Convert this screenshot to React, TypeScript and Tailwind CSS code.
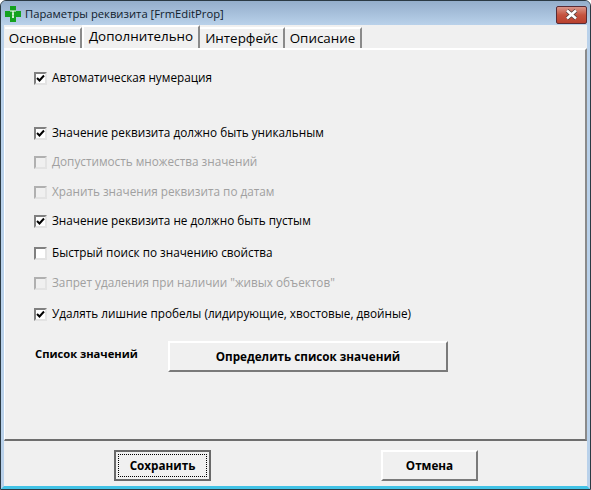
import React from 'react';

const font = "font-['Open_Sans','Liberation_Sans',sans-serif]";

// Square classic checkbox, sunken look, grey when the option is off limits
const Check = ({ checked, disabled }: { checked?: boolean; disabled?: boolean }) => (
  <span className={`flex h-[13px] w-[13px] shrink-0 items-center justify-center border-2 border-r-[#e3e3e3] border-b-[#e3e3e3] ${disabled ? 'border-t-[#b0b0b0] border-l-[#b0b0b0] bg-[#f0f0f0]' : 'border-t-[#808080] border-l-[#808080] bg-white'}`}>
    {checked && (
      <svg width="9" height="9" viewBox="0 0 9 9">
        <path d="M1 4 L3.5 6.5 L8 1.5" fill="none" stroke="#000" strokeWidth="2" />
      </svg>
    )}
  </span>
);

const Row = ({ label, checked, disabled, className }: { label: string; checked?: boolean; disabled?: boolean; className: string }) => (
  <div className={`flex h-[16px] items-center gap-[5px] ${className}`}>
    <Check checked={checked} disabled={disabled} />
    <span className={`text-[11.75px] leading-none whitespace-nowrap ${disabled ? 'text-[#a0a0a0]' : 'text-black'}`}>{label}</span>
  </div>
);

const Tab = ({ label, active, className }: { label: string; active?: boolean; className: string }) => (
  <div className={`flex items-center justify-center border-r-2 border-[#8a8a8a] text-[13.4px] text-black ${active ? 'h-[23px] border-t-2 border-l-2 border-t-white border-l-white pb-[3px]' : 'mt-[2px] h-[21px] border-t-2 border-t-white'} ${className}`}>
    {label}
  </div>
);

const RaisedButton = ({ children, className }: { children: React.ReactNode; className: string }) => (
  <div className={`flex items-center justify-center border-t-2 border-l-2 border-t-white border-l-white border-r-2 border-b-2 border-r-[#7a7a7a] border-b-[#7a7a7a] text-[11.7px] font-bold text-black ${className}`}>
    {children}
  </div>
);

export default function App() {
  return (
    <div className={`flex h-[490px] w-[591px] flex-col overflow-hidden rounded-t-[6px] border border-[#2b3a44] bg-[#9db8d2] ${font}`}>
      {/* Title bar */}
      <div className="flex h-[24px] shrink-0 items-center bg-gradient-to-b from-[#94aecb] to-[#b9d1ea] pl-[4px] pr-[3px]">
        <svg width="16" height="16" viewBox="0 0 16 16" className="mt-[1px] shrink-0">
          <path d="M5 0h6v5h5v6h-5v5H5v-5H0V5h5z" fill="#14a21e" />
          <path d="M5 5h6M8 5v7M7 8h2M7 11h2" stroke="#fff" strokeWidth="1.2" />
        </svg>
        <span className="ml-[4px] mt-[2px] text-[11.25px] text-[#10202c]">Параметры реквизита [FrmEditProp]</span>
        <div className="ml-auto mt-[3px] flex h-[18px] w-[31px] items-center justify-center rounded-[2px] border border-[#5a2b33] bg-gradient-to-b from-[#d9968a] via-[#c5533f] to-[#b9402e]">
          <svg width="15" height="11" viewBox="0 0 15 11">
            <path d="M3 1.5 L12 9.5 M12 1.5 L3 9.5" stroke="#4a3a3a" strokeWidth="4" />
            <path d="M3 1.5 L12 9.5 M12 1.5 L3 9.5" stroke="#fff" strokeWidth="2.6" />
          </svg>
        </div>
      </div>

      <div className="flex min-h-0 flex-1 flex-col border-x-[3px] border-b-[3px] border-x-[#b9d1ea] border-b-[#42c3e6] bg-[#f0f0f0]">
        {/* Tabs */}
        <div className="flex h-[23px] shrink-0 pl-[1px]">
          <Tab className="w-[77px]" label="Основные" />
          <Tab className="w-[118px]" label="Дополнительно" active />
          <Tab className="w-[85px]" label="Интерфейс" />
          <Tab className="w-[77px]" label="Описание" />
        </div>

        {/* Tab page */}
        <div className="flex h-[393px] shrink-0 flex-col border-t-2 border-t-white border-l border-l-white border-r-2 border-r-[#8a8a8a] border-b-2 border-b-[#6e6e6e] pl-[29px]">
          <Row className="mt-[20px]" label="Автоматическая нумерация" checked />
          <Row className="mt-[39px]" label="Значение реквизита должно быть уникальным" checked />
          <Row className="mt-[13px]" label="Допустимость множества значений" disabled />
          <Row className="mt-[14px]" label="Хранить значения реквизита по датам" disabled />
          <Row className="mt-[13px]" label="Значение реквизита не должно быть пустым" checked />
          <Row className="mt-[16px]" label="Быстрый поиск по значению свойства" />
          <Row className="mt-[14px]" label="Запрет удаления при наличии &quot;живых объектов&quot;" disabled />
          <Row className="mt-[15px]" label="Удалять лишние пробелы (лидирующие, хвостовые, двойные)" checked />
          <div className="mt-[19px] flex items-start">
            <span className="ml-[1px] mt-[5px] w-[133px] text-[11.2px] font-bold leading-[16px] text-black">Список значений</span>
            <RaisedButton className="h-[31px] w-[280px]">Определить список значений</RaisedButton>
          </div>
        </div>

        {/* Footer buttons */}
        <div className="flex flex-1 items-start pl-[110px] pt-[9px]">
          <div className="flex h-[31px] w-[97px] items-center justify-center border-2 border-[#696969] p-[2px]">
            <div className="flex h-full w-full items-center justify-center border border-dotted border-black text-[11.7px] font-bold text-black">Сохранить</div>
          </div>
          <RaisedButton className="ml-[170px] h-[31px] w-[97px]">Отмена</RaisedButton>
        </div>
      </div>
    </div>
  );
}
